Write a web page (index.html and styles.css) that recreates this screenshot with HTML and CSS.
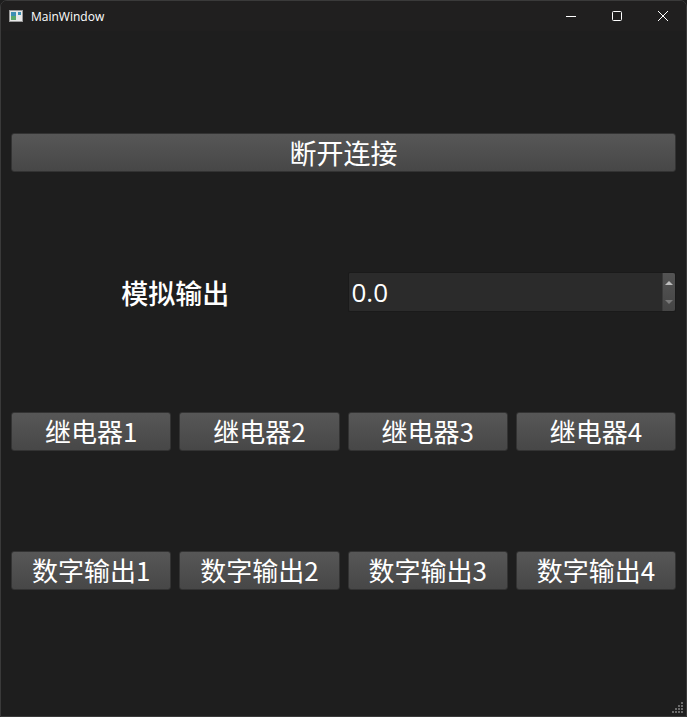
FILE: index.html
```html
<!DOCTYPE html>
<html>
<head>
  <title>MainWindow</title>
  <meta charset="UTF-8">
  <link rel="stylesheet" href="styles.css">
</head>
<body>

<div class="window">
  <div class="titlebar">
    <svg class="app-icon" width="14" height="12" viewBox="0 0 14 12">
      <rect x="0.5" y="0.5" width="13" height="11" fill="#e8e8e8" stroke="#9a9a9a"/>
      <rect x="2" y="2" width="5" height="8" fill="#3d8fb3"/>
      <rect x="2" y="6" width="5" height="4" fill="#5aa86b"/>
      <rect x="9" y="2" width="3" height="3" fill="#3d8fb3"/>
    </svg>
    <span class="title">MainWindow</span>
    <div class="controls">
      <div class="ctrl">
        <svg width="10" height="10" viewBox="0 0 10 10"><line x1="0" y1="5.5" x2="10" y2="5.5" stroke="#fff" stroke-width="1"/></svg>
      </div>
      <div class="ctrl">
        <svg width="10" height="10" viewBox="0 0 10 10"><rect x="0.5" y="0.5" width="9" height="9" rx="1" fill="none" stroke="#fff" stroke-width="1"/></svg>
      </div>
      <div class="ctrl">
        <svg width="10" height="10" viewBox="0 0 10 10"><path d="M0 0 L10 10 M10 0 L0 10" stroke="#fff" stroke-width="1"/></svg>
      </div>
    </div>
  </div>

  <div class="content">
    <button class="button main-button">断开连接</button>

    <div class="analog-row">
      <div class="label">模拟输出</div>
      <div class="spinbox">
        <span class="value">0.0</span>
        <div class="spin-arrows">
          <span class="arrow up"></span>
          <span class="arrow down"></span>
        </div>
      </div>
    </div>

    <div class="button-row">
      <button class="button">继电器1</button>
      <button class="button">继电器2</button>
      <button class="button">继电器3</button>
      <button class="button">继电器4</button>
    </div>

    <div class="button-row">
      <button class="button">数字输出1</button>
      <button class="button">数字输出2</button>
      <button class="button">数字输出3</button>
      <button class="button">数字输出4</button>
    </div>
  </div>

  <div class="grip">
    <svg width="12" height="12" viewBox="0 0 12 12" fill="#6a6a6a">
      <rect x="9" y="0" width="2" height="2"/>
      <rect x="6" y="3" width="2" height="2"/><rect x="9" y="3" width="2" height="2"/>
      <rect x="3" y="6" width="2" height="2"/><rect x="6" y="6" width="2" height="2"/><rect x="9" y="6" width="2" height="2"/>
      <rect x="0" y="9" width="2" height="2"/><rect x="3" y="9" width="2" height="2"/><rect x="6" y="9" width="2" height="2"/><rect x="9" y="9" width="2" height="2"/>
    </svg>
  </div>
</div>

</body>
</html>
```

FILE: styles.css
```css
html, body {
    margin: 0;
    padding: 0;
    background-color: #1e1e1e;
}
.window {
    position: relative;
    width: 687px;
    height: 717px;
    box-sizing: border-box;
    border: 1px solid #3a3a3a;
    border-radius: 7px 7px 0 0;
    background-color: #1e1e1e;
    color: white;
    overflow: hidden;
}
.titlebar {
    height: 30px;
    background-color: #201f1f;
    display: flex;
    align-items: center;
}
.app-icon {
    margin-left: 8px;
    margin-top: -1px;
}
.title {
    margin-left: 8px;
    font-family: "Open Sans", "Noto Sans", sans-serif;
    font-size: 12px;
    color: #ffffff;
}
.controls {
    margin-left: auto;
    display: flex;
    height: 100%;
}
.ctrl {
    width: 46px;
    height: 100%;
    display: flex;
    align-items: center;
    justify-content: center;
}
.content {
    padding: 102px 10px 0 10px;
    display: flex;
    flex-direction: column;
    gap: 100px;
}
.button {
    height: 39px;
    padding: 0 0 1px 0;
    margin: 0;
    font-family: "Noto Sans CJK SC", "Noto Sans", sans-serif;
    font-size: 26px;
    color: #ffffff;
    background: linear-gradient(#575757, #474747);
    border: 1px solid #333333;
    border-radius: 3px;
    line-height: 1;
}
.main-button {
    width: 100%;
    font-size: 27px;
}
.analog-row {
    display: grid;
    grid-template-columns: 1fr 1fr;
    gap: 8px;
    height: 40px;
}
.label {
    display: flex;
    align-items: center;
    justify-content: center;
    font-family: "Noto Sans CJK SC", sans-serif;
    font-size: 27px;
    font-weight: 500;
}
.spinbox {
    display: flex;
    align-items: center;
    background-color: #2b2b2b;
    border: 1px solid #1a1a1a;
    border-radius: 2px;
}
.value {
    flex: 1;
    padding-left: 3px;
    font-family: "Open Sans", "Noto Sans", sans-serif;
    font-size: 26px;
}
.spin-arrows {
    width: 12px;
    height: 100%;
    background: linear-gradient(#545454, #454545);
    border-left: 1px solid #3a3a3a;
    border-radius: 0 2px 2px 0;
    display: flex;
    flex-direction: column;
    align-items: center;
    justify-content: space-around;
}
.arrow {
    width: 0;
    height: 0;
    border-left: 4px solid transparent;
    border-right: 4px solid transparent;
}
.arrow.up {
    border-bottom: 4px solid #bdbdbd;
}
.arrow.down {
    border-top: 4px solid #7a7a7a;
}
.button-row {
    display: grid;
    grid-template-columns: repeat(4, 1fr);
    gap: 8px;
}
.grip {
    position: absolute;
    right: 2px;
    bottom: 2px;
    line-height: 0;
}
```
